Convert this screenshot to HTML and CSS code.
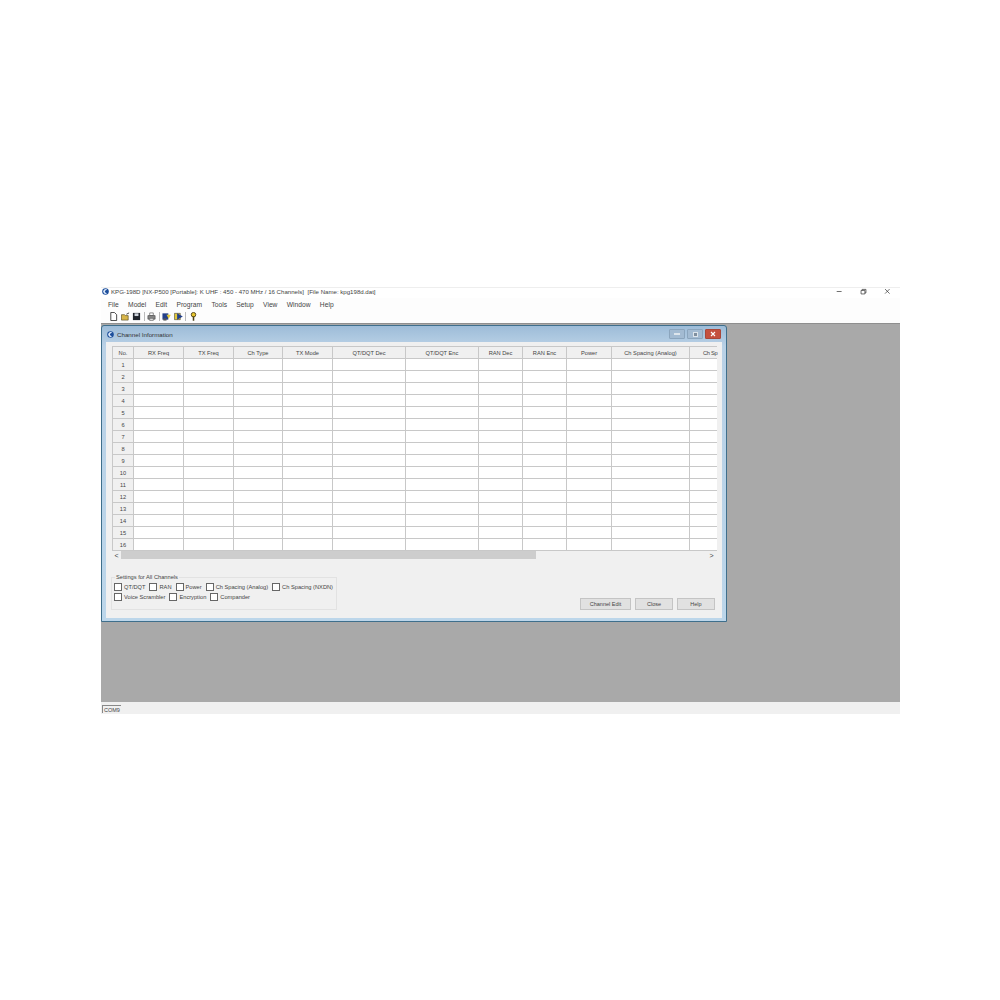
FILE: index.html
```html
<!DOCTYPE html>
<html lang="en">
<head>
    <meta charset="UTF-8">
    <title>KPG-198D</title>
    <link rel="stylesheet" href="styles.css">
</head>
<body>
    <div class="app">
        <div class="titlebar">
            <svg class="logo" viewBox="0 0 10 10"><circle cx="5" cy="5" r="4.7" fill="#1d4f9c"/><path d="M7.6 2.6A3.4 3.4 0 1 0 7.2 7.6 3.6 3.6 0 0 1 4 5 3.6 3.6 0 0 1 7.6 2.6Z" fill="#dfeafa"/></svg>
            <span class="app-title">KPG-198D [NX-P500 [Portable]: K UHF : 450 - 470 MHz / 16 Channels]&nbsp; [File Name: kpg198d.dat]</span>
            <div class="win-controls">
                <svg viewBox="0 0 10 10"><path d="M1 5H8" stroke="#333"/></svg>
                <svg viewBox="0 0 10 10"><path d="M1.5 3.5H7V8.5H1.5ZM3 3.5V2H8.5V7H7" fill="none" stroke="#333"/></svg>
                <svg viewBox="0 0 10 10"><path d="M1.5 1.5L8 8M8 1.5L1.5 8" stroke="#333"/></svg>
            </div>
        </div>
        <div class="menubar">
            <span>File</span><span>Model</span><span>Edit</span><span>Program</span><span>Tools</span><span>Setup</span><span>View</span><span>Window</span><span>Help</span>
        </div>
        <div class="toolbar">
            <svg class="tool" viewBox="0 0 10 10"><path d="M2 .5H6L8.5 3V9.5H2Z" fill="#fff" stroke="#222" stroke-width=".9"/></svg>
            <svg class="tool" viewBox="0 0 10 10"><path d="M.5 3H4L5 4H8V9H.5Z" fill="#d8b64a" stroke="#55481a" stroke-width=".7"/><path d="M6 2.5L9 1" stroke="#333"/></svg>
            <svg class="tool" viewBox="0 0 10 10"><path d="M1 1H9V9H1Z" fill="#20242c"/><path d="M2.8 1.5H7.2V4.5H2.8Z" fill="#cfd4dc"/></svg>
            <i class="sep"></i>
            <svg class="tool" viewBox="0 0 10 10"><path d="M3 1H7V4H3Z" fill="#fff" stroke="#555" stroke-width=".7"/><path d="M1 4H9V8H1Z" fill="#888" stroke="#444" stroke-width=".7"/><path d="M3 7H7V9.5H3Z" fill="#ddd" stroke="#555" stroke-width=".6"/></svg>
            <i class="sep"></i>
            <svg class="tool" viewBox="0 0 10 10"><path d="M.5 1.5H7V8.5H.5Z" fill="#24408a"/><path d="M5 3H9.8L7.4 7.5Z" fill="#e3c93a"/><path d="M1.5 7H5V9.5H1.5Z" fill="#555"/></svg>
            <svg class="tool" viewBox="0 0 10 10"><path d="M.5 1.5H7V8.5H.5Z" fill="#e3c93a" stroke="#333" stroke-width=".6"/><path d="M3.5 1.5L9.8 5 3.5 8.5Z" fill="#24408a"/></svg>
            <i class="sep"></i>
            <svg class="tool" viewBox="0 0 10 10"><circle cx="5" cy="3" r="2.5" fill="#e8c62e" stroke="#4c4015" stroke-width="1"/><path d="M5 5V9.7" stroke="#4c4015" stroke-width="1.7"/></svg>
        </div>
        <div class="workspace">
            <div class="child-window">
                <div class="child-title">
                    <svg class="logo" viewBox="0 0 10 10"><circle cx="5" cy="5" r="4.7" fill="#1d4f9c"/><path d="M7.6 2.6A3.4 3.4 0 1 0 7.2 7.6 3.6 3.6 0 0 1 4 5 3.6 3.6 0 0 1 7.6 2.6Z" fill="#dfeafa"/></svg>
                    <span>Channel Information</span>
                    <div class="child-controls">
                        <i class="ctl"><b class="ctl-min"></b></i>
                        <i class="ctl"><b class="ctl-max"></b></i>
                        <i class="ctl ctl-close"><svg viewBox="0 0 6 6"><path d="M1 1L5 5M5 1L1 5" stroke="#fff" stroke-width="1.1"/></svg></i>
                    </div>
                </div>
                <div class="child-body">
                    <div class="grid-wrap">
                        <table class="grid">
                            <colgroup>
                                <col class="w21"><col class="w50"><col class="w50"><col class="w49"><col class="w50"><col class="w73"><col class="w73"><col class="w44"><col class="w44"><col class="w45"><col class="w78"><col class="w27">
                            </colgroup>
                            <thead>
                                <tr><th>No.</th><th>RX Freq</th><th>TX Freq</th><th>Ch Type</th><th>TX Mode</th><th>QT/DQT Dec</th><th>QT/DQT Enc</th><th>RAN Dec</th><th>RAN Enc</th><th>Power</th><th>Ch Spacing (Analog)</th><th class="clipped">Ch Sp</th></tr>
                            </thead>
                            <tbody id="rows"></tbody>
                        </table>
                        <div class="hscroll">
                            <span class="arrow">&lt;</span>
                            <div class="track"><div class="thumb"></div></div>
                            <span class="arrow">&gt;</span>
                        </div>
                    </div>
                    <div class="bottom">
                        <fieldset class="settings">
                            <legend>Settings for All Channels</legend>
                            <div class="check-row">
                                <label><i class="box"></i>QT/DQT</label>
                                <label><i class="box"></i>RAN</label>
                                <label><i class="box"></i>Power</label>
                                <label><i class="box"></i>Ch Spacing (Analog)</label>
                                <label><i class="box"></i>Ch Spacing (NXDN)</label>
                            </div>
                            <div class="check-row">
                                <label><i class="box"></i>Voice Scrambler</label>
                                <label><i class="box"></i>Encryption</label>
                                <label><i class="box"></i>Compander</label>
                            </div>
                        </fieldset>
                        <div class="buttons">
                            <button class="btn btn-wide">Channel Edit</button>
                            <button class="btn">Close</button>
                            <button class="btn">Help</button>
                        </div>
                    </div>
                </div>
            </div>
        </div>
        <div class="statusbar"><span class="status-cell">COM9</span></div>
    </div>

    <script>
        // 16 empty channel rows
        const rows = document.getElementById('rows');
        for (let i = 1; i <= 16; i++) {
            const tr = document.createElement('tr');
            tr.innerHTML = `<th>${i}</th>` + '<td></td>'.repeat(11);
            rows.appendChild(tr);
        }
    </script>
</body>
</html>
```
FILE: styles.css
```css
body {
    margin: 0;
    background: #ffffff;
    font-family: "Liberation Sans", Arial, sans-serif;
    font-size: 5.7px;
    color: #444;
}
.app {
    width: 799px;
    margin: 287px 0 0 101px;
    display: flex;
    flex-direction: column;
    height: 427px;
}
.titlebar {
    height: 11px;
    box-sizing: border-box;
    padding-bottom: 3px;
    display: flex;
    align-items: center;
    background: #fff;
    border-top: 1px solid #eeeeee;
    font-size: 6.1px;
}
.logo {
    width: 7px;
    height: 7px;
    margin: 0 2px 0 1px;
    flex: none;
}
.app-title {
    white-space: nowrap;
}
.win-controls {
    margin-left: auto;
    display: flex;
    gap: 17px;
    margin-right: 9px;
}
.win-controls svg {
    width: 7px;
    height: 7px;
}
.menubar {
    height: 12px;
    display: flex;
    align-items: center;
    gap: 9.3px;
    padding-left: 7px;
    background: #fdfdfd;
    font-size: 6.7px;
}
.toolbar {
    height: 13px;
    display: flex;
    align-items: center;
    gap: 2.5px;
    padding-left: 8px;
    background: #fdfdfd;
}
.tool {
    width: 9px;
    height: 9px;
}
.sep {
    width: 1px;
    height: 9px;
    background: #bbb;
}
.workspace {
    flex: 1;
    position: relative;
    background: #a9a9a9;
    border-top: 1px solid #8f8f8f;
}
.child-window {
    position: absolute;
    left: 0;
    top: 1px;
    width: 626px;
    height: 297px;
    box-sizing: border-box;
    border: 1px solid #3f6f8c;
    border-radius: 3px 3px 0 0;
    background: linear-gradient(#9dbcd8, #b9d1e6 20px, #bcd6ea);
    padding: 0 4px 3px;
    display: flex;
    flex-direction: column;
}
.child-title {
    height: 16px;
    flex: none;
    display: flex;
    align-items: center;
    gap: 1px;
    font-size: 6.2px;
    color: #333;
}
.child-controls {
    margin-left: auto;
    margin-right: 1px;
    display: flex;
    gap: 2px;
}
.ctl {
    width: 16px;
    height: 10px;
    box-sizing: border-box;
    display: flex;
    align-items: center;
    justify-content: center;
    background: #a3bbd2;
    border: 1px solid #8ba5bd;
    border-radius: 1px;
}
.ctl-min {
    width: 6px;
    height: 2px;
    border: 1px solid #dde5ec;
    background: #8c9fb2;
    box-sizing: border-box;
}
.ctl-max {
    width: 5px;
    height: 5px;
    border: 1px solid #dde5ec;
    background: #7f8f9f;
    box-sizing: border-box;
}
.ctl-close {
    background: #c4503f;
    border-color: #a8473a;
}
.ctl-close svg {
    width: 6px;
    height: 6px;
}
.child-body {
    flex: 1;
    background: #f0f0f0;
    padding: 4px 5px 0 6px;
    display: flex;
    flex-direction: column;
    min-height: 0;
}
.grid-wrap {
    width: 604px;
}
.grid {
    border-collapse: collapse;
    table-layout: fixed;
    width: 604px;
    background: #fff;
}
.w21 { width: 21px; }
.w27 { width: 27px; }
.w44 { width: 44px; }
.w45 { width: 45px; }
.w49 { width: 49px; }
.w50 { width: 50px; }
.w73 { width: 73px; }
.w78 { width: 78px; }
.grid th,
.grid td {
    height: 12px;
    padding: 0;
    box-sizing: border-box;
    border: 1px solid #c8c8c8;
    font-weight: normal;
    text-align: center;
    overflow: hidden;
    white-space: nowrap;
}
.grid th {
    background: #f0f0f0;
}
.grid .clipped {
    border-right: 0;
    text-align: left;
    padding-left: 13px;
    letter-spacing: -0.3px;
    overflow: visible;
}
.grid td:last-child {
    border-right: 0;
}
.hscroll {
    height: 8px;
    display: flex;
    align-items: center;
    font-size: 7px;
}
.arrow {
    width: 9px;
    text-align: center;
    flex: none;
}
.track {
    flex: 1;
    height: 8px;
}
.thumb {
    width: 415px;
    height: 8px;
    background: #cdcdcd;
}
.bottom {
    flex: 1;
    margin-left: -1px;
    display: flex;
    justify-content: space-between;
    align-items: flex-end;
    padding-bottom: 8px;
}
.settings {
    width: 226px;
    min-width: 0;
    height: 36px;
    box-sizing: border-box;
    margin: 0;
    padding: 2px 0 0 2px;
    border: 1px solid #e2e2e2;
}
.settings legend {
    padding: 0 1px;
    margin-left: 1px;
}
.check-row {
    display: flex;
    gap: 4px;
    height: 10px;
    align-items: center;
}
.check-row label {
    display: flex;
    align-items: center;
    gap: 2px;
    white-space: nowrap;
}
.box {
    width: 8px;
    height: 8px;
    box-sizing: border-box;
    border: 1px solid #666;
    background: #fff;
}
.buttons {
    display: flex;
    gap: 4px;
    margin-right: 2px;
}
.btn {
    width: 38px;
    height: 12px;
    padding: 0;
    font: inherit;
    font-size: 5.5px;
    color: #444;
    background: #e1e1e1;
    border: 1px solid #c4c4c4;
}
.btn-wide {
    width: 51px;
}
.statusbar {
    height: 12px;
    box-sizing: border-box;
    padding: 2px 0 0 1px;
    background: #f0f0f0;
    display: flex;
    align-items: center;
    font-size: 5.5px;
}
.status-cell {
    border-top: 1px solid #888;
    border-left: 1px solid #888;
    padding: 1px 1px 0 1px;
}
```
